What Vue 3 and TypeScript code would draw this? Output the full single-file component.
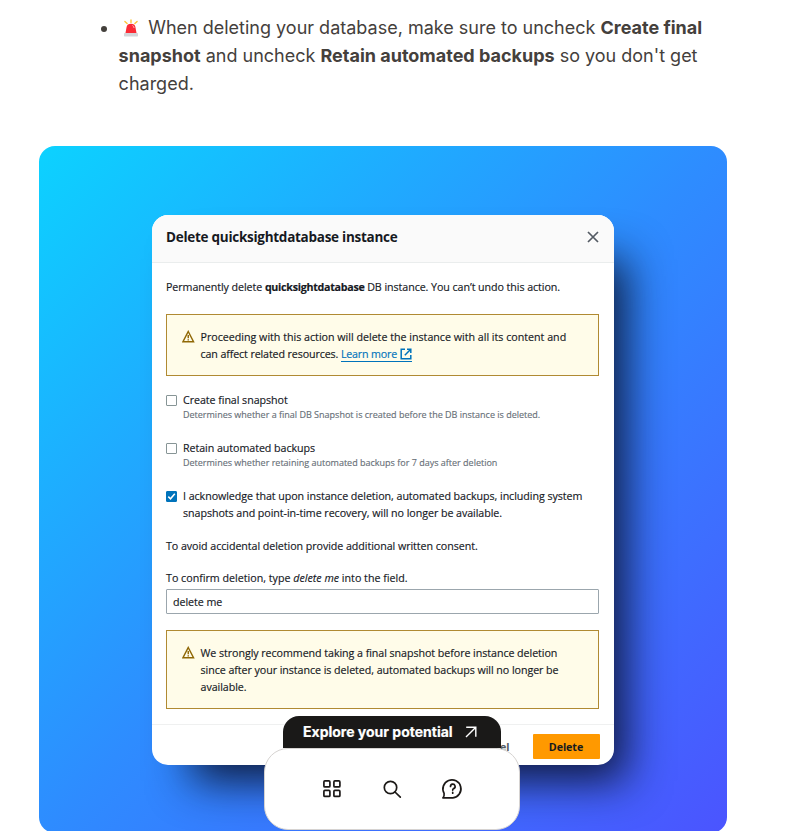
<script setup lang="ts">
interface Option {
  label: string[]
  hint?: string
  checked: boolean
}

const options: Option[] = [
  {
    label: ['Create final snapshot'],
    hint: 'Determines whether a final DB Snapshot is created before the DB instance is deleted.',
    checked: false,
  },
  {
    label: ['Retain automated backups'],
    hint: 'Determines whether retaining automated backups for 7 days after deletion',
    checked: false,
  },
  {
    label: [
      'I acknowledge that upon instance deletion, automated backups, including system',
      'snapshots and point-in-time recovery, will no longer be available.',
    ],
    checked: true,
  },
]
</script>

<template>
  <main class="page">
    <ul class="notes">
      <li>
        <svg class="siren" viewBox="0 0 16 18">
          <g stroke="#fcc53a" stroke-width="1.4" stroke-linecap="round">
            <path d="M8 .9v2.5M1.9 2.5l2.2 2.1M14.1 2.5l-2.2 2.1" />
          </g>
          <path d="M2.4 14.5 3.6 8Q4.200 4.700 8 4.700T12.400 8l1.200 6.500z" fill="#fb2b35" />
          <path d="M9.400 6.500q1.500.5 1.700 2.500" stroke="#ffb4b4" fill="none" />
          <rect x="1" y="14" width="14" height="3.500" rx=".7" fill="#d4d5d9" />
        </svg>
        When deleting your database, make sure to uncheck <b>Create final<br />snapshot</b> and uncheck
        <b>Retain automated backups</b> so you don't get<br />charged.
      </li>
    </ul>

    <section class="canvas">
      <div class="modal">
        <header class="head">
          <h2>Delete quicksightdatabase instance</h2>
          <svg class="close" viewBox="0 0 12 12"><path d="m1 1 10 10M11 1 1 11" /></svg>
        </header>

        <div class="body">
          <p class="intro">Permanently delete <b>quicksightdatabase</b> DB instance. You can’t undo this action.</p>

          <div class="alert first">
            <svg class="warn" viewBox="0 0 13 13"><path d="M6.500 1.300 12 12H1z" /><path d="M6.500 5v3.400M6.500 9.300v1.400" /></svg>
            <p>
              <span class="lead">Proceeding with this action will delete the instance with all its content and</span><br />
              can affect related resources.
              <a>Learn more<svg viewBox="0 0 12 12"><path d="M5 1.200H1.200v9.600h9.600V7M7 1.200h3.800V5M10.500 1.500 4.800 7.200" /></svg></a>
            </p>
          </div>

          <div v-for="(o, i) in options" :key="i" class="option" :class="`opt-${i}`">
            <span class="box" :class="{ on: o.checked }">
              <svg v-if="o.checked" viewBox="0 0 11 11"><path d="m2.300 5.600 2.200 2.200 4.300-5" /></svg>
            </span>
            <div>
              <div v-for="line in o.label" :key="line" class="label">{{ line }}</div>
              <div v-if="o.hint" class="hint">{{ o.hint }}</div>
            </div>
          </div>

          <p class="consent">To avoid accidental deletion provide additional written consent.</p>
          <p class="confirm">To confirm deletion, type <i>delete me</i> into the field.</p>
          <div class="field">delete me</div>

          <div class="alert second">
            <svg class="warn" viewBox="0 0 13 13"><path d="M6.500 1.300 12 12H1z" /><path d="M6.500 5v3.400M6.500 9.300v1.400" /></svg>
            <p>
              We strongly recommend taking a final snapshot before instance deletion<br />
              since after your instance is deleted, automated backups will no longer be<br />
              available.
            </p>
          </div>
        </div>

        <footer class="foot">
          <span class="cancel">Cancel</span>
          <span class="delete">Delete</span>
        </footer>
      </div>
    </section>

    <aside class="dock">
      <div class="promo">
        Explore your potential
        <svg viewBox="0 0 12 12"><path d="M1.200 1.200h9.600v9.600M10.800 1.200 1 11" /></svg>
      </div>
      <nav class="bar">
        <svg viewBox="0 0 20 20">
          <rect x="1.900" y="1.900" width="6" height="6" rx="1" />
          <rect x="11.900" y="1.900" width="6" height="6" rx="1" />
          <rect x="1.900" y="11.400" width="6" height="6" rx="1" />
          <rect x="11.900" y="11.400" width="6" height="6" rx="1" />
        </svg>
        <svg viewBox="0 0 20 20"><circle cx="8.500" cy="8.500" r="6.200" /><path d="m13 13 5.300 5.200" /></svg>
        <svg class="help" viewBox="0 0 22 22">
          <path d="M1.900 19.800c1.500-1.300 1.500-2.200 1.200-4.500A9 9 0 1 1 11.900 19.800z" />
          <path d="M9.500 8.500a2.300 2.300 0 1 1 3.200 2.100c-.8.400-1 .8-1 1.500" />
          <path d="M11.700 14.400v.8" />
        </svg>
      </nav>
    </aside>
  </main>
</template>

<style>
body {
  background: #fff;
  overflow: hidden;
}
</style>

<style scoped>
* {
  box-sizing: border-box;
}
p,
h2,
ul {
  margin: 0;
  padding: 0;
}
.page {
  position: relative;
  height: 831px;
  overflow: hidden;
  padding: 14px 66px 0 39px;
}
.notes {
  padding-left: 79.600px;
  height: 132px;
  font: 18px/28px Inter, sans-serif;
  color: #44403c;
  white-space: nowrap;
}
.notes b {
  font-weight: 700;
}
.siren {
  width: 16px;
  height: 18px;
  margin: 0 4.500px 0 4px;
  vertical-align: -3px;
}
.canvas {
  height: 687px;
  border-radius: 16px;
  padding: 69px 0 0 112.500px;
  background: linear-gradient(135deg, #0cd2ff 0%, #2e8cff 50%, #4b54ff 100%);
}
.modal {
  width: 462px;
  height: 550px;
  border-radius: 16px;
  background: #fff;
  overflow: hidden;
  box-shadow: 26px 30px 44px -14px rgba(10, 16, 40, 0.9);
  font: 500 10.700px/17px 'Open Sans', 'Noto Sans', sans-serif;
  font-stretch: 90%;
  letter-spacing: -0.06px;
  color: #16191f;
  white-space: nowrap;
  display: flex;
  flex-direction: column;
}
.head {
  height: 48px;
  background: #fafafa;
  border-bottom: 1px solid #eaeded;
  padding: 0 15px 3px 14.500px;
  display: flex;
  align-items: center;
  justify-content: space-between;
}
.head h2 {
  font-size: 13.500px;
  font-weight: 700;
  letter-spacing: -0.27px;
}
.close {
  width: 12px;
  height: 12px;
  fill: none;
  stroke: #545b64;
  stroke-width: 1.700;
}
.body {
  flex: 1;
  padding: 16px 14.500px 0 14.500px;
  -webkit-text-stroke: 0.150px;
}
.intro {
  letter-spacing: -0.07px;
}
.intro b {
  letter-spacing: -0.28px;
}
.alert {
  border: 1px solid #b08a32;
  background: #fffce9;
  display: flex;
  padding: 14px 0 0 15px;
  gap: 6px;
}
.first {
  margin-top: 18px;
  height: 62px;
}
.first p {
  letter-spacing: -0.12px;
}
.first .lead {
  letter-spacing: -0.01px;
}
.warn {
  width: 12.500px;
  height: 13px;
  margin-top: 1px;
  fill: none;
  stroke: #906806;
  stroke-width: 1.500;
}
a {
  color: #0073bb;
  letter-spacing: -0.18px;
  border-bottom: 1px solid #0073bb;
}
a svg {
  width: 12px;
  height: 12px;
  margin-left: 3px;
  vertical-align: -2px;
  fill: none;
  stroke: currentColor;
  stroke-width: 1.500;
}
.option {
  display: flex;
  gap: 6px;
  height: 48px;
}
.opt-0 {
  margin-top: 16px;
}
.box {
  width: 11px;
  height: 11px;
  margin-top: 2.500px;
  border: 1px solid #879596;
  border-radius: 1px;
  display: flex;
}
.box.on {
  background: #0073bb;
  border-color: #0073bb;
}
.box svg {
  margin: -1px;
  width: 11px;
  height: 11px;
  flex: none;
  fill: none;
  stroke: #fff;
  stroke-width: 1.500;
}
.hint {
  font-size: 9px;
  line-height: 12px;
  font-weight: 500;
  letter-spacing: 0;
  color: #687078;
}
.opt-2 {
  height: 49.500px;
}
.consent {
  height: 32.500px;
}
.confirm {
  letter-spacing: 0;
}
.field {
  height: 25px;
  margin-top: 2px;
  border: 1px solid #9ba6ad;
  border-radius: 1px;
  padding: 4px 6px;
}
.second {
  margin-top: 16px;
  height: 79px;
}
.second p {
  margin-top: -0.500px;
}
.foot {
  height: 41px;
  border-top: 1px solid #eff0f0;
  padding: 9px 14px 0 0;
  display: flex;
  justify-content: flex-end;
  gap: 23px;
  line-height: 26px;
  font-weight: 700;
}
.cancel {
  color: #545b64;
}
.delete {
  width: 67px;
  height: 25px;
  background: #ff9900;
  border-radius: 1px;
  text-align: center;
}
.dock {
  position: absolute;
  left: 264px;
  top: 716px;
  width: 256px;
  display: flex;
  flex-direction: column;
  align-items: center;
}
.promo {
  width: 218px;
  height: 32px;
  background: #1a1918;
  color: #fff;
  border-radius: 16px 16px 0 0;
  font: 700 14px/32px Inter, sans-serif;
  -webkit-text-stroke: 0.200px;
  display: flex;
  align-items: center;
  justify-content: space-between;
  padding: 0 24px 0 20px;
  white-space: nowrap;
}
.promo svg {
  width: 12px;
  height: 12px;
  fill: none;
  stroke: #fff;
  stroke-width: 1.400;
}
.bar {
  width: 256px;
  height: 82px;
  border: 1px solid #d6d3d1;
  border-radius: 24px;
  background: #fff;
  display: flex;
  justify-content: center;
  align-items: center;
  gap: 40px;
}
.bar svg {
  width: 20px;
  height: 20px;
  fill: none;
  stroke: #1c1917;
  stroke-width: 1.700;
  stroke-linecap: round;
  stroke-linejoin: round;
}
.bar .help {
  width: 22px;
  height: 22px;
  margin: 0 -1px;
}
</style>
